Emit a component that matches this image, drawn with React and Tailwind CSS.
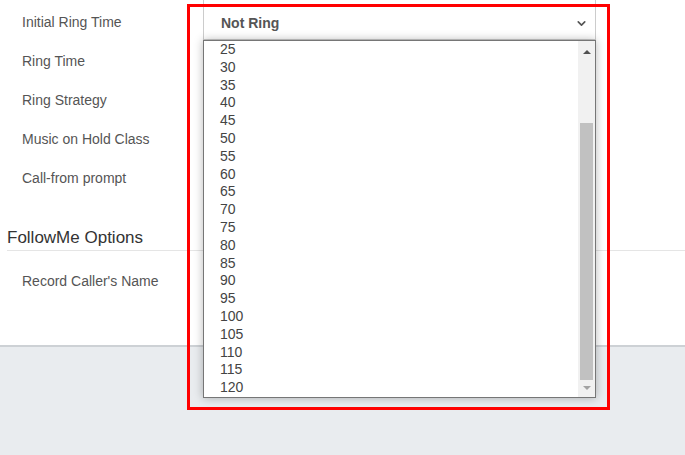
import React from "react";
import { ChevronDown } from "lucide-react";

const labels = ["Initial Ring Time", "Ring Time", "Ring Strategy", "Music on Hold Class", "Call-from prompt"];
const options = [25, 30, 35, 40, 45, 50, 55, 60, 65, 70, 75, 80, 85, 90, 95, 100, 105, 110, 115, 120];

const App = () => {
  return (
    <div className="relative w-[685px] h-[455px] overflow-hidden bg-[#e9ecef] font-['Liberation_Sans',Arial,sans-serif]">
      {/* form panel */}
      <div className="h-[347px] bg-white border-b-2 border-[#cdd1d5] pt-[2.5px]">
        {labels.map((l) => (
          <div key={l} className="h-[39px] flex items-center pl-[22px] text-[14px] text-[#555]">
            {l}
          </div>
        ))}
        <div className="ml-[7px] mt-[30.5px] pb-[2px] border-b border-[#e5e5e5] text-[17px] text-[#333] leading-[20px]">
          FollowMe Options
        </div>
        <div className="h-[60px] flex items-center pl-[22px] text-[14px] text-[#555]">Record Caller's Name</div>
      </div>

      {/* open select */}
      <div className="absolute left-[203px] top-[-2px] w-[393px]">
        <div className="h-[42px] flex items-center justify-between pt-[8px] pl-[17px] pr-[7px] bg-white border border-[#ccc] text-[14px] font-bold text-[#555]">
          <span>Not Ring</span>
          <ChevronDown className="w-[13px] h-[13px] text-[#555]" strokeWidth={3} />
        </div>
        <div className="flex h-[358px] bg-white border border-[#767676] shadow-[0_0_9px_rgba(0,0,0,0.28)]">
          <div className="flex-1 flex flex-col">
            {options.map((o) => (
              <div key={o} className="h-[17.8px] leading-[17.8px] pl-[16px] text-[14px] text-[#444]">
                {o}
              </div>
            ))}
          </div>
          <div className="w-[17px] bg-[#f1f1f1] flex flex-col items-center">
            <svg width="8" height="17" viewBox="0 0 8 17" className="mt-[2px]">
              <path d="M0 11 L4 7 L8 11 Z" fill="#505050" />
            </svg>
            <div className="mt-[63px] w-[13px] h-[258px] bg-[#c1c1c1]" />
            <svg width="8" height="17" viewBox="0 0 8 17">
              <path d="M0 6 L8 6 L4 10 Z" fill="#a3a3a3" />
            </svg>
          </div>
        </div>
      </div>

      {/* annotation */}
      <div className="absolute left-[187px] top-[4px] w-[423px] h-[406px] border-[3px] border-[#ff0000]" />
    </div>
  );
};

export default App;
